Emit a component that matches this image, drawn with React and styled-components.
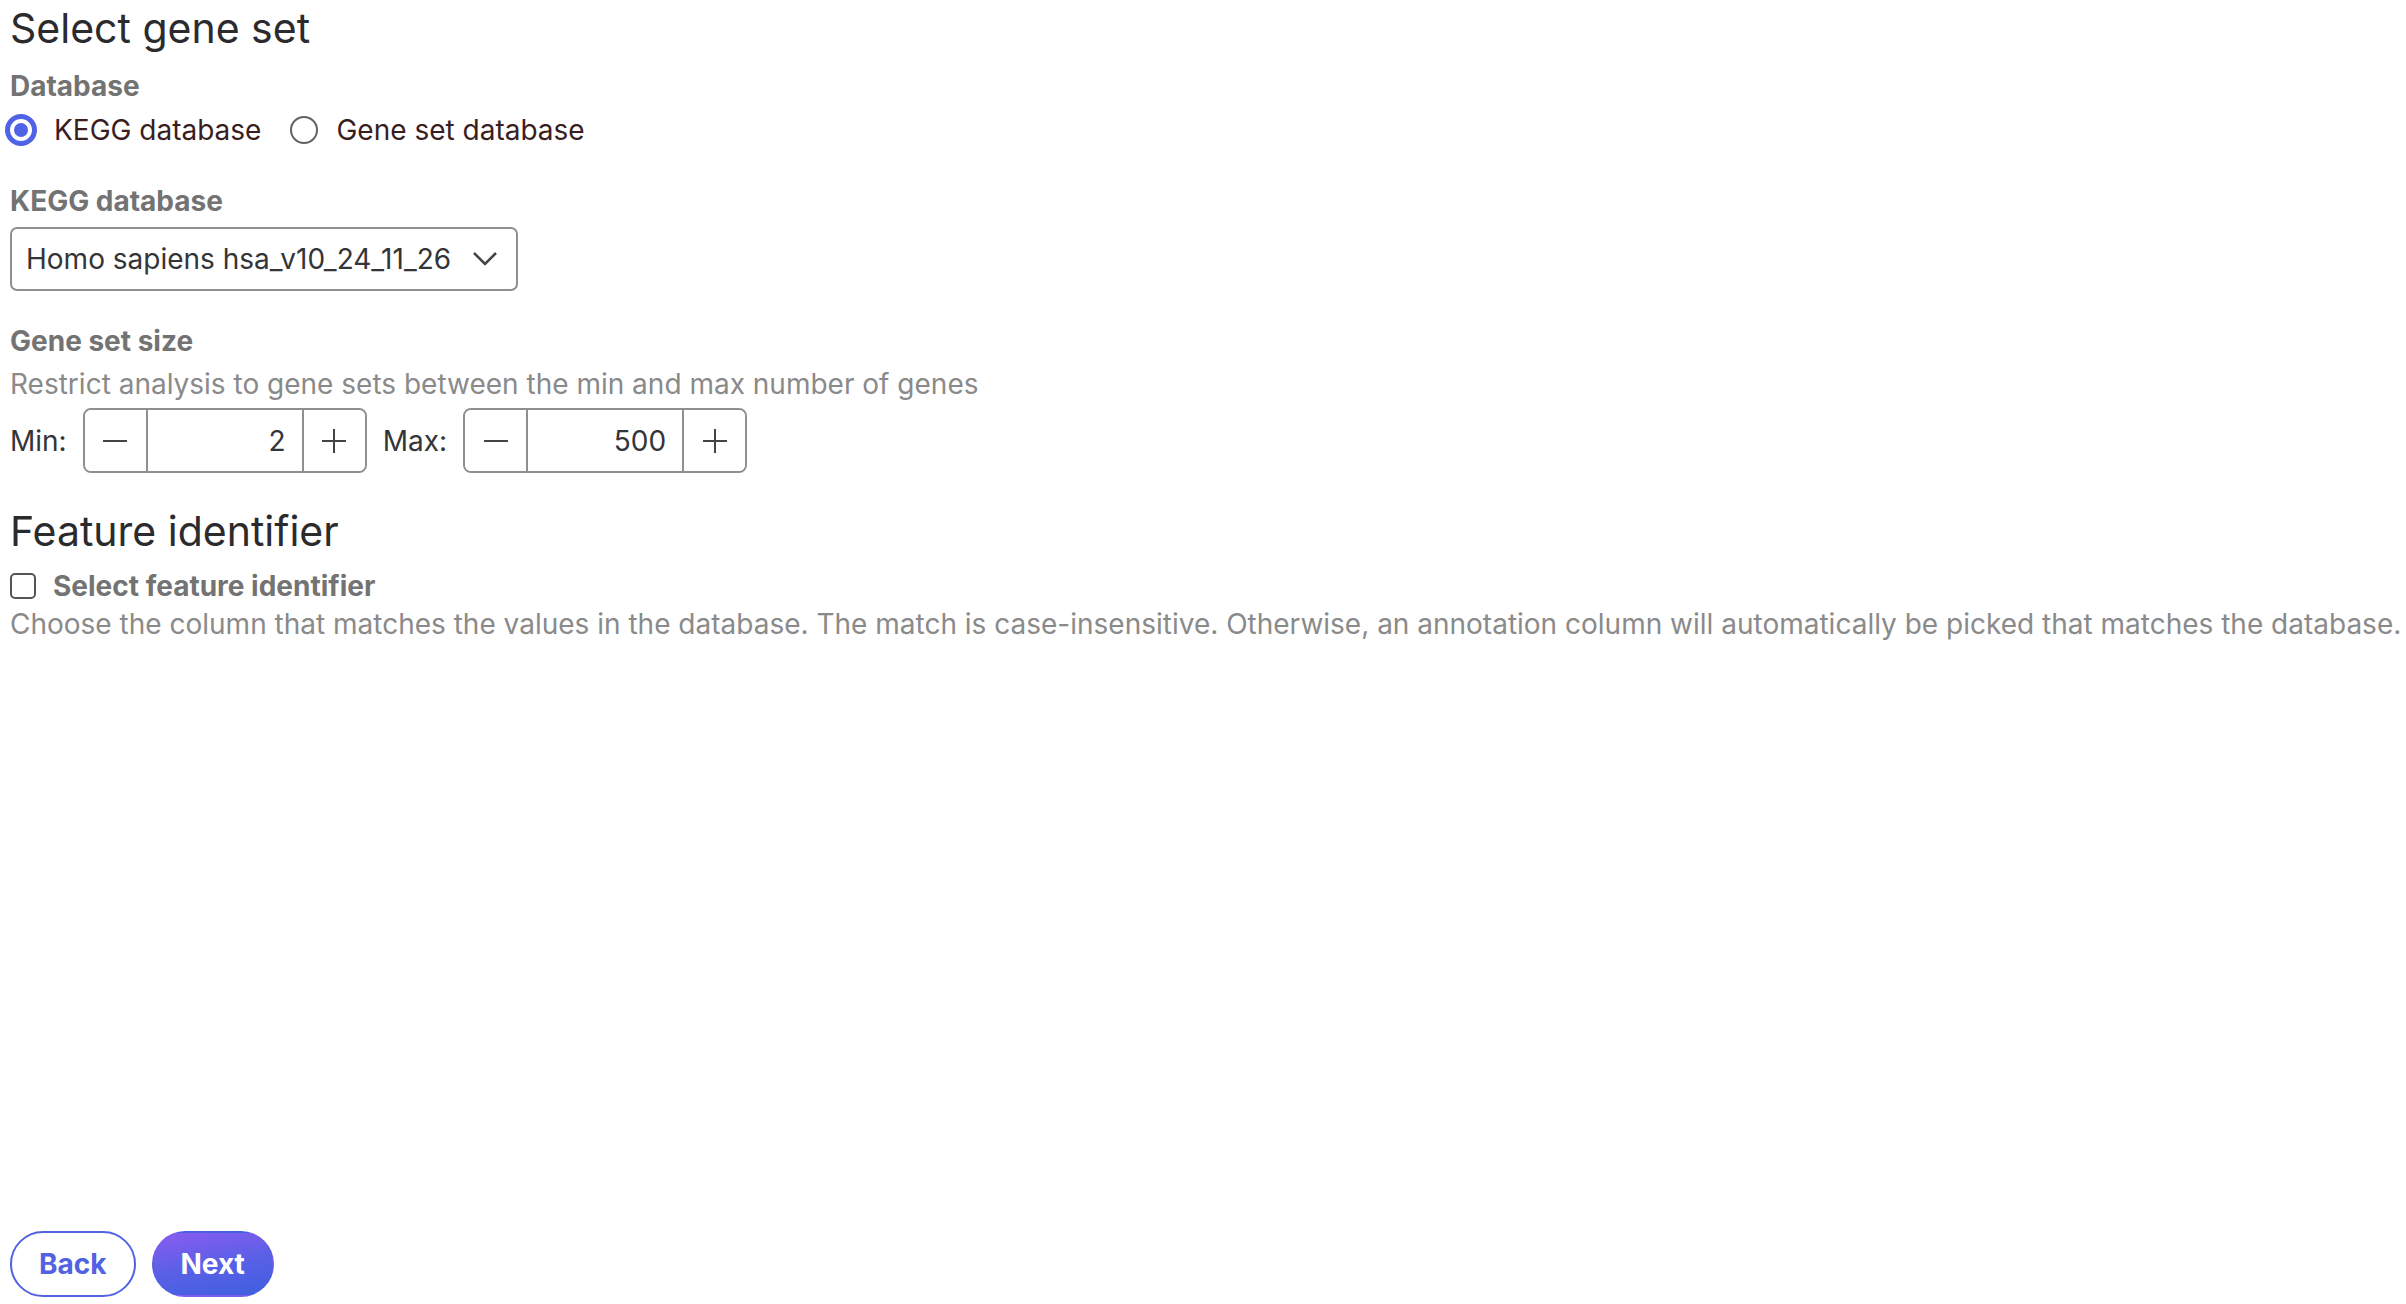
import React from "react";
import styled, { createGlobalStyle } from "styled-components";

const Global = createGlobalStyle`
  html, body { margin: 0; padding: 0; background: #fff; }
  body { font-family: Inter, "Noto Sans", sans-serif; }
  * { box-sizing: border-box; }
`;

const Page = styled.div`
  min-height: 100vh;
  display: flex;
  flex-direction: column;
  padding: 0 10px 7px 10px;
`;

const Main = styled.div`
  display: flex;
  flex-direction: column;
  align-items: flex-start;
`;

const Title = styled.h2`
  margin: ${(p) => p.$top || 0}px 0 0 0;
  font-size: 41px;
  font-weight: 400;
  color: #2b2b2e;
  line-height: 56px;
`;

const Label = styled.div`
  font-size: 28px;
  font-weight: 700;
  color: #737373;
  line-height: 42px;
  margin-top: ${(p) => p.$top || 0}px;
`;

const RadioRow = styled.div`
  display: flex;
  align-items: center;
  gap: 29px;
  height: 42px;
  margin-top: 2px;
`;

const RadioItem = styled.label`
  display: flex;
  align-items: center;
  gap: 17px;
  font-size: 28px;
  color: #3a1e1f;
`;

const RadioDot = styled.span`
  width: ${(p) => (p.$checked ? 32 : 28)}px;
  height: ${(p) => (p.$checked ? 32 : 28)}px;
  border-radius: 50%;
  display: inline-flex;
  align-items: center;
  justify-content: center;
  border: ${(p) => (p.$checked ? "5px solid #5062e6" : "2px solid #626262")};
  margin-left: ${(p) => (p.$checked ? -5 : 0)}px;
  margin-right: ${(p) => (p.$checked ? 0 : 1)}px;
  &::after {
    content: "";
    display: ${(p) => (p.$checked ? "block" : "none")};
    width: 14px;
    height: 14px;
    border-radius: 50%;
    background: #5062e6;
  }
`;

const SelectBox = styled.div`
  margin-top: 5px;
  width: 508px;
  height: 64px;
  border: 2px solid #8f8f8f;
  border-radius: 7px;
  display: flex;
  align-items: center;
  justify-content: space-between;
  padding: 0 18px 0 14px;
  font-size: 28px;
  color: #333538;
`;

const Desc = styled.div`
  font-size: 28px;
  color: #8a8a8a;
  line-height: 38px;
  white-space: nowrap;
  margin-top: ${(p) => p.$top || 0}px;
`;

const StepRow = styled.div`
  display: flex;
  align-items: center;
  margin-top: 5px;
  gap: 16px;
`;

const RowLabel = styled.span`
  font-size: 28px;
  color: #333538;
`;

const Stepper = styled.div`
  display: flex;
  height: 65px;
  border: 2px solid #8f8f8f;
  border-radius: 8px;
  overflow: hidden;
`;

const StepBtn = styled.button`
  width: 63px;
  border: none;
  background: #fff;
  display: flex;
  align-items: center;
  justify-content: center;
  padding: 0;
  color: #444;
  border-left: ${(p) => (p.$side === "right" ? "2px solid #8f8f8f" : "none")};
  border-right: ${(p) => (p.$side === "left" ? "2px solid #8f8f8f" : "none")};
`;

const StepValue = styled.div`
  width: 154px;
  display: flex;
  align-items: center;
  justify-content: flex-end;
  padding-right: 16px;
  font-size: 28px;
  color: #333538;
`;

const CheckRow = styled.label`
  display: flex;
  align-items: center;
  gap: 17px;
  margin-top: 8px;
  font-size: 28px;
  font-weight: 700;
  color: #737373;
  line-height: 38px;
`;

const CheckBox = styled.span`
  width: 26px;
  height: 26px;
  border: 2px solid #555;
  border-radius: 5px;
`;

const Footer = styled.div`
  margin-top: auto;
  display: flex;
  gap: 16px;
`;

const Button = styled.button`
  height: 66px;
  padding: 0 27px;
  border-radius: 33px;
  font-family: Inter, sans-serif;
  font-size: 28px;
  font-weight: 700;
  border: 2px solid;
  color: ${(p) => (p.$primary ? "#fff" : "#5262e2")};
  background: ${(p) =>
    p.$primary
      ? "linear-gradient(170deg, #8a5cf0 0%, #5b60e6 50%, #3e5fdf 100%)"
      : "#fff"};
  border-color: ${(p) => (p.$primary ? "transparent" : "#5262e2")};
`;

const Minus = () => (
  <svg width="26" height="26" viewBox="0 0 26 26">
    <path d="M1 13h24" stroke="#444" strokeWidth="2" />
  </svg>
);
const Plus = () => (
  <svg width="26" height="26" viewBox="0 0 26 26">
    <path d="M1 13h24M13 1v24" stroke="#444" strokeWidth="2" />
  </svg>
);
const Chevron = () => (
  <svg width="26" height="16" viewBox="0 0 26 16">
    <path d="M2 2l11 11L24 2" stroke="#444" strokeWidth="2.6" fill="none" />
  </svg>
);

export default function App() {
  return (
    <Page>
      <Global />
      <Main>
        <Title>Select gene set</Title>
        <Label $top={9}>Database</Label>
        <RadioRow>
          <RadioItem>
            <RadioDot $checked />
            KEGG database
          </RadioItem>
          <RadioItem>
            <RadioDot />
            Gene set database
          </RadioItem>
        </RadioRow>
        <Label $top={29}>KEGG database</Label>
        <SelectBox>
          <span>Homo sapiens hsa_v10_24_11_26</span>
          <Chevron />
        </SelectBox>
        <Label $top={29}>Gene set size</Label>
        <Desc $top={3}>Restrict analysis to gene sets between the min and max number of genes</Desc>
        <StepRow>
          <RowLabel>Min:</RowLabel>
          <Stepper>
            <StepBtn $side="left"><Minus /></StepBtn>
            <StepValue>2</StepValue>
            <StepBtn $side="right"><Plus /></StepBtn>
          </Stepper>
          <RowLabel>Max:</RowLabel>
          <Stepper>
            <StepBtn $side="left"><Minus /></StepBtn>
            <StepValue>500</StepValue>
            <StepBtn $side="right"><Plus /></StepBtn>
          </Stepper>
        </StepRow>
        <Title $top={30}>Feature identifier</Title>
        <CheckRow>
          <CheckBox />
          Select feature identifier
        </CheckRow>
        <Desc>
          Choose the column that matches the values in the database. The match is case-insensitive. Otherwise, an annotation column will automatically be picked that matches the database.
        </Desc>
      </Main>
      <Footer>
        <Button>Back</Button>
        <Button $primary>Next</Button>
      </Footer>
    </Page>
  );
}
